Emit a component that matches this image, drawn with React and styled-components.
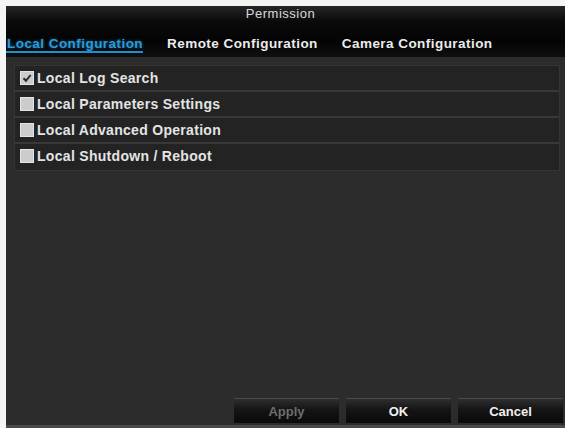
import React from 'react';
import styled, { createGlobalStyle } from 'styled-components';

const GlobalStyle = createGlobalStyle`
  html, body {
    margin: 0;
    padding: 0;
    background: #f4f4f4;
  }
  body {
    font-family: 'Liberation Sans', Arial, sans-serif;
  }
`;

const Frame = styled.div`
  width: 565px;
  height: 428px;
  box-sizing: border-box;
  padding: 6px 0 0 6px;
  display: flex;
`;

const Panel = styled.div`
  flex: 1;
  display: flex;
  flex-direction: column;
  background: #2c2c2c;
  border-bottom: 3px solid #4a4a4a;
`;

const Header = styled.div`
  height: 51px;
  display: flex;
  flex-direction: column;
  background: linear-gradient(#262626 0%, #0a0a0a 30%, #040404 70%, #101010 100%);
`;

const Title = styled.div`
  height: 15px;
  display: flex;
  align-items: center;
  justify-content: center;
  padding-right: 10px;
  color: #d8d8d8;
  font-size: 13px;
  letter-spacing: 0.5px;
`;

const Tabs = styled.div`
  display: flex;
  gap: 23px;
  padding-top: 16px;
`;

const Tab = styled.div`
  padding: 0 0 0 1px;
  line-height: 14px;
  font-size: 13.5px;
  font-weight: bold;
  letter-spacing: 0.45px;
  color: ${({ active }) => (active ? '#2a9ad8' : '#ececec')};
  border-bottom: 2px solid ${({ active }) => (active ? '#1f8fd0' : 'transparent')};
  text-shadow: ${({ active }) => (active ? '0 0 3px rgba(40,150,220,0.6)' : 'none')};
`;

const Body = styled.div`
  flex: 1;
  display: flex;
  flex-direction: column;
  padding: 8px 5px 0 8px;
`;

const List = styled.div`
  display: flex;
  flex-direction: column;
  background: #232323;
  border: 1px solid #343434;
`;

const Row = styled.div`
  height: 24px;
  display: flex;
  align-items: center;
  gap: 3px;
  padding-left: 5px;
  border-bottom: 2px solid ${({ last }) => (last ? 'transparent' : '#383838')};
  color: #e4e4e4;
  font-size: 14px;
  font-weight: bold;
  letter-spacing: 0.3px;
`;

const Box = styled.span`
  width: 14px;
  height: 14px;
  display: flex;
  align-items: center;
  justify-content: center;
  background: #cccccc;
  box-shadow: inset 0 0 0 1px #e4e4e4;
`;

const Footer = styled.div`
  display: flex;
  justify-content: flex-end;
  gap: 7px;
  padding: 0 2px 0 0;
  margin-bottom: 2px;
`;

const Button = styled.div`
  width: 105px;
  height: 25px;
  display: flex;
  align-items: center;
  justify-content: center;
  box-sizing: border-box;
  background: linear-gradient(#2e2e2e 0%, #141414 45%, #0a0a0a 100%);
  border-top: 1px solid #4a4a4a;
  font-size: 13px;
  font-weight: bold;
  color: ${({ disabled }) => (disabled ? '#6e6e6e' : '#f0f0f0')};
`;

const Check = () => (
  <svg width="10" height="10" viewBox="0 0 10 10">
    <path d="M1.5 5.2 L4 7.8 L8.6 2" fill="none" stroke="#2a2a2a" strokeWidth="2" />
  </svg>
);

const items = [
  { label: 'Local Log Search', checked: true },
  { label: 'Local Parameters Settings', checked: false },
  { label: 'Local Advanced Operation', checked: false },
  { label: 'Local Shutdown / Reboot', checked: false },
];

const App = () => (
  <>
    <GlobalStyle />
    <Frame>
      <Panel>
        <Header>
          <Title>Permission</Title>
          <Tabs>
            <Tab active>Local Configuration</Tab>
            <Tab>Remote Configuration</Tab>
            <Tab>Camera Configuration</Tab>
          </Tabs>
        </Header>

        <Body>
          <List>
            {items.map((item, i) => (
              <Row key={item.label} last={i === items.length - 1}>
                <Box>{item.checked && <Check />}</Box>
                {item.label}
              </Row>
            ))}
          </List>
        </Body>

        <Footer>
          <Button disabled>Apply</Button>
          <Button>OK</Button>
          <Button>Cancel</Button>
        </Footer>
      </Panel>
    </Frame>
  </>
);

export default App;
